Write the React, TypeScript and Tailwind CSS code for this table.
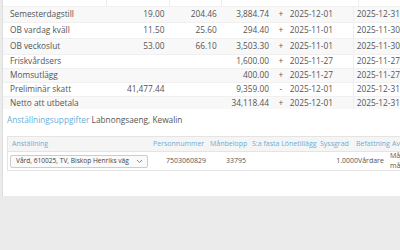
import React from "react";

const rows = [
  { name: "Semesterdagstill", q: "19.00", p: "204.46", a: "3,884.74", s: "+", d1: "2025-12-01", d2: "2025-12-31", h: "h-[16px]" },
  { name: "OB vardag kväll", q: "11.50", p: "25.60", a: "294.40", s: "+", d1: "2025-11-01", d2: "2025-11-30", h: "h-[16px]" },
  { name: "OB veckoslut", q: "53.00", p: "66.10", a: "3,503.30", s: "+", d1: "2025-11-01", d2: "2025-11-30", h: "h-[16px]" },
  { name: "Friskvårdsers", q: "", p: "", a: "1,600.00", s: "+", d1: "2025-11-27", d2: "2025-11-27", h: "h-[14px]" },
  { name: "Momsutlägg", q: "", p: "", a: "400.00", s: "+", d1: "2025-11-27", d2: "2025-11-27", h: "h-[14px]" },
  { name: "Preliminär skatt", q: "41,477.44", p: "", a: "9,359.00", s: "-", d1: "2025-12-01", d2: "2025-12-31", h: "h-[14px]" },
  { name: "Netto att utbetala", q: "", p: "", a: "34,118.44", s: "+", d1: "2025-12-01", d2: "2025-12-31", h: "h-[13px]" },
];

export default function App() {
  return (
    <div className="w-[400px] h-[250px] bg-[#ebebeb] overflow-hidden text-[#555] text-[8.3px]" style={{ fontFamily: '"Open Sans", "Noto Sans", sans-serif' }}>
      <div className="ml-[2px] h-[196px] bg-white border-l border-[#dedede] flex flex-col">
        {/* top table */}
        <div className="flex flex-col">
          <div className="h-[6px] flex">
            <div className="w-[104px] border-r border-[#eee]" />
            <div className="w-[63px] border-r border-[#eee]" />
            <div className="w-[52px] border-r border-[#eee]" />
            <div className="w-[56px]" />
            <div className="w-[14px]" />
            <div className="w-[67px] border-r border-[#eee]" />
            <div className="flex-1" />
          </div>
          {rows.map((r, i) => (
            <div key={i} className={`${r.h} flex items-center ${i % 2 === 0 ? "bg-[#f8f8f8]" : "bg-white"} border-t border-[#f0f0f0]`}>
              <div className="w-[104px] pl-[7px] whitespace-nowrap">{r.name}</div>
              <div className="w-[63px] text-right pr-[3px]">{r.q}</div>
              <div className="w-[52px] text-right pr-[2px] whitespace-nowrap">{r.p}</div>
              <div className="w-[56px] text-right pr-[5px]">{r.a}</div>
              <div className="w-[14px] text-center">{r.s}</div>
              <div className="w-[67px] pl-[2px] h-full flex items-center border-r border-[#eee]">{r.d1}</div>
              <div className="flex-1 pl-[3px] whitespace-nowrap">{r.d2}</div>
            </div>
          ))}
        </div>

        {/* section heading */}
        <div className="mt-[5px] pl-[4px] text-[8.3px] leading-[12px] whitespace-nowrap">
          <span className="text-[#6aaed6]">Anställningsuppgifter</span>{" "}
          <span className="text-[#555]">Labnongsaeng, Kewalin</span>
        </div>

        {/* employment table */}
        <div className="mt-[10px] ml-[4px] border border-[#e4e4e4] border-r-0 bg-white text-[7px]">
          <div className="h-[15px] bg-[#f5f5f5] flex items-center text-[#6aaed6] whitespace-nowrap border-b border-[#e4e4e4]">
            <div className="w-[142px] pl-[4px]">Anställning</div>
            <div className="w-[58px] pl-[3px]">Personnummer</div>
            <div className="w-[42px] pl-[2px]">Månbelopp</div>
            <div className="w-[68px] pl-[2px]">S:a fasta Lönetillägg</div>
            <div className="w-[36px] pl-[2px]">Syssgrad</div>
            <div className="w-[37px] pl-[2px]">Befattning</div>
            <div className="flex-1 pl-[1px] overflow-hidden">Avl</div>
          </div>
          <div className="h-[18px] flex items-center whitespace-nowrap">
            <div className="w-[142px] pl-[2px]">
              <div className="h-[13px] w-[138px] border border-[#ccc] rounded-[2px] bg-[#fafafa] flex items-center pl-[5px] text-[#444] text-[6.6px]">
                <span className="flex-1 overflow-hidden">Vård, 610025, TV, Biskop Henriks väg</span>
                <svg width="7" height="5" viewBox="0 0 7 5" className="mr-[4px]"><path d="M1 1 L3.5 3.5 L6 1" fill="none" stroke="#777" strokeWidth="0.9" /></svg>
              </div>
            </div>
            <div className="w-[58px] text-right pr-[2px]">7503060829</div>
            <div className="w-[42px] pl-[18px]">33795</div>
            <div className="w-[68px]" />
            <div className="w-[40px] text-right">1.0000</div>
            <div className="w-[31px]">Vårdare</div>
            <div className="flex-1 pl-[1px] leading-[10px] flex flex-col overflow-hidden">
              <span>Mån</span>
              <span>mån</span>
            </div>
          </div>
        </div>
      </div>
    </div>
  );
}
